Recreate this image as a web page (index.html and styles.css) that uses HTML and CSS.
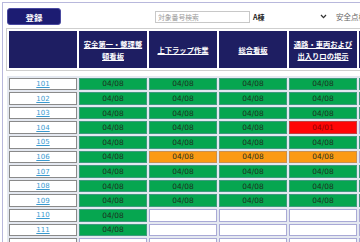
FILE: index.html
```html
<!DOCTYPE html>
<html>

<head>
    <title>安全点検一覧</title>
    <link rel="stylesheet" href="styles.css">
</head>

<body>
    <div class="frame">
        <!-- ツールバー：登録ボタン・検索・棟選択 -->
        <div class="toolbar">
            <button class="btn-register">登録</button>
            <input class="search" type="text" placeholder="対象番号検索">
            <div class="building">
                <span>A棟</span>
                <svg width="7" height="5" viewBox="0 0 7 5"><path d="M1 1 L3.5 3.6 L6 1" fill="none" stroke="#333" stroke-width="1.3"/></svg>
            </div>
            <span class="inspect">安全点検</span>
        </div>

        <!-- 見出し -->
        <table class="head">
            <colgroup>
                <col><col><col><col><col><col>
            </colgroup>
            <tr>
                <th></th>
                <th><a href="#">安全第一・整理整頓看板</a></th>
                <th><a href="#">上下ラップ作業</a></th>
                <th><a href="#">総合看板</a></th>
                <th><a href="#">通路・車両および出入り口の掲示</a></th>
                <th></th>
            </tr>
        </table>

        <!-- 部屋ごとの点検日 -->
        <table class="grid">
            <colgroup>
                <col><col><col><col><col><col>
            </colgroup>
            <tr><td class="no"><a href="#">101</a></td><td class="ok">04/08</td><td class="ok">04/08</td><td class="ok">04/08</td><td class="ok">04/08</td><td class="ok"></td></tr>
            <tr><td class="no"><a href="#">102</a></td><td class="ok">04/08</td><td class="ok">04/08</td><td class="ok">04/08</td><td class="ok">04/08</td><td class="ok"></td></tr>
            <tr><td class="no"><a href="#">103</a></td><td class="ok">04/08</td><td class="ok">04/08</td><td class="ok">04/08</td><td class="ok">04/08</td><td class="ok"></td></tr>
            <tr><td class="no"><a href="#">104</a></td><td class="ok">04/08</td><td class="ok">04/08</td><td class="ok">04/08</td><td class="ng">04/01</td><td></td></tr>
            <tr><td class="no"><a href="#">105</a></td><td class="ok">04/08</td><td class="ok">04/08</td><td class="ok">04/08</td><td class="ok">04/08</td><td class="ok"></td></tr>
            <tr><td class="no"><a href="#">106</a></td><td class="ok">04/08</td><td class="warn">04/08</td><td class="warn">04/08</td><td class="warn">04/08</td><td></td></tr>
            <tr><td class="no"><a href="#">107</a></td><td class="ok">04/08</td><td class="ok">04/08</td><td class="ok">04/08</td><td class="ok">04/08</td><td class="ok"></td></tr>
            <tr><td class="no"><a href="#">108</a></td><td class="ok">04/08</td><td class="ok">04/08</td><td class="ok">04/08</td><td class="ok">04/08</td><td class="ok"></td></tr>
            <tr><td class="no"><a href="#">109</a></td><td class="ok">04/08</td><td class="ok">04/08</td><td class="ok">04/08</td><td class="ok">04/08</td><td class="ok"></td></tr>
            <tr><td class="no"><a href="#">110</a></td><td class="ok">04/08</td><td></td><td></td><td></td><td></td></tr>
            <tr><td class="no"><a href="#">111</a></td><td class="ok">04/08</td><td></td><td></td><td></td><td></td></tr>
            <tr><td class="no"></td><td></td><td></td><td></td><td></td><td></td></tr>
        </table>
    </div>
</body>

</html>
```

FILE: styles.css
```css
html,
body {
    margin: 0;
    height: 100%;
    overflow: hidden;
    background: #fff;
    font-family: "DejaVu Sans", "Noto Sans CJK JP", sans-serif;
}

/* 外枠 */
.frame {
    margin: 2px 0 0 2px;
    padding: 5px 0 0 3px;
    border-left: 1px solid #b8b8dc;
    border-top: 1px solid #b8b8dc;
    height: 100%;
    box-sizing: border-box;
}

.toolbar {
    display: flex;
    align-items: center;
    height: 17px;
    padding-left: 1px;
    white-space: nowrap;
}

.toolbar > * {
    flex-shrink: 0;
}

.btn-register {
    width: 54px;
    height: 17px;
    padding: 0;
    background: #1c1c72;
    color: #fff;
    border: 1px solid #4a4aa0;
    border-radius: 3px;
    font-family: "Noto Sans CJK JP", sans-serif;
    font-size: 8.5px;
    font-weight: bold;
}

.search {
    margin-left: 94px;
    width: 95px;
    height: 12px;
    box-sizing: border-box;
    padding: 0 2px;
    border: 1px solid #c8c8c8;
    font-family: "Noto Sans CJK JP", sans-serif;
    font-size: 6.8px;
}

.search::placeholder {
    color: #999;
}

.building {
    display: flex;
    align-items: center;
    justify-content: space-between;
    width: 81px;
    height: 12px;
    padding: 0 4px 0 3px;
    box-sizing: border-box;
    font-family: "Noto Sans CJK JP", sans-serif;
    font-size: 7px;
    font-weight: bold;
    color: #222;
}

.inspect {
    margin-left: 5px;
    font-family: "Noto Sans CJK JP", sans-serif;
    font-size: 7.5px;
    color: #666;
}

/* 見出しテーブル */
.head {
    margin-top: 3px;
    width: 424px;
    table-layout: fixed;
    border-collapse: separate;
    border-spacing: 2px;
    border: 1px solid #cfcfcf;
}

.head col,
.grid col {
    width: 68px;
}

.head th {
    height: 37px;
    padding: 0 4px;
    background: #1e1e62;
    text-align: center;
    vertical-align: middle;
    font-family: "Noto Sans CJK JP", sans-serif;
    font-size: 7.3px;
    font-weight: bold;
    line-height: 12px;
}

.head th a {
    color: #fff;
}

/* 本体テーブル */
.grid {
    margin: 4.7px 0 0 1px;
    width: 422px;
    table-layout: fixed;
    border-collapse: separate;
    border-spacing: 2px;
    background: #e4e8f0;
}

.grid tr {
    height: 12.6px;
}

.grid td {
    padding: 0;
    background: #fff;
    border: 1px solid #a9a9d6;
    text-align: center;
    vertical-align: middle;
    font-size: 7.4px;
    line-height: 9px;
    color: #1d2e1d;
}

.grid td.no {
    border-color: #8a8a8a;
}

.grid td.no a {
    color: #3a9ad0;
    font-size: 7px;
}

.grid td.ok {
    background: #06a650;
    border-color: #3f9a7e;
}

.grid td.warn {
    background: #fb9a14;
    border-color: #c99050;
}

.grid td.ng {
    background: #ff0606;
    border-color: #c04040;
    color: #8a0000;
}
```
